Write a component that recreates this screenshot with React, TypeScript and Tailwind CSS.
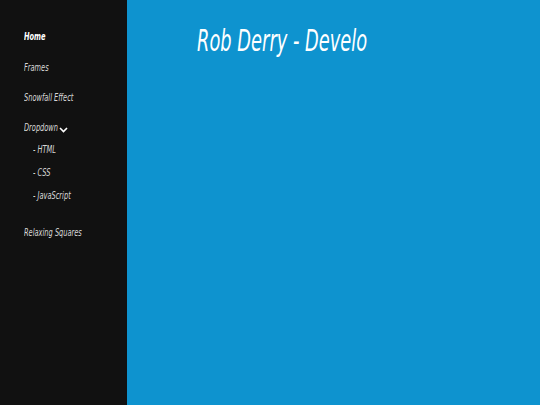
import React from 'react';

const font = { fontFamily: '"DejaVu Sans Condensed", "Liberation Sans", sans-serif' };

const NavLink = ({ label, active, sub }: { label: string; active?: boolean; sub?: boolean }) => (
  <a
    href="#"
    className={`block w-max origin-left scale-x-[0.67] whitespace-nowrap italic text-[11px] leading-none ${sub ? 'ml-[9px]' : ''} ${
      active ? 'text-white font-bold' : 'text-[#d8d8d8]'
    }`}
  >
    {label}
  </a>
);

export default function App() {
  return (
    <div className="flex w-[540px] h-[405px] overflow-hidden leading-none" style={font}>
      {/* Sidebar */}
      <nav className="w-[127px] shrink-0 bg-[#111111] pl-[24px] pt-[31px]">
        <ul className="flex flex-col">
          <li className="h-[31px]"><NavLink label="Home" active /></li>
          <li className="h-[30px]"><NavLink label="Frames" /></li>
          <li className="h-[30px]"><NavLink label="Snowfall Effect" /></li>
          <li>
            <div className="flex items-center h-[11px]">
              <NavLink label="Dropdown" />
              <svg width="9" height="6" viewBox="0 0 9 6" className="-ml-[16px] mt-[4px]" fill="none" stroke="white" strokeWidth="1.6">
                <path d="M1 1l3.5 3.5L8 1" />
              </svg>
            </div>
            <ul className="flex flex-col pt-[11px]">
              <li className="h-[23px]"><NavLink label="- HTML" sub /></li>
              <li className="h-[23px]"><NavLink label="- CSS" sub /></li>
              <li className="h-[37px]"><NavLink label="- JavaScript" sub /></li>
            </ul>
          </li>
          <li><NavLink label="Relaxing Squares" /></li>
        </ul>
      </nav>

      {/* Main */}
      <main className="flex-1 bg-[#0e93cf] pl-[70px] pt-[25px]">
        <h1 className="w-max origin-left scale-x-[0.64] whitespace-nowrap italic text-white text-[31px] leading-none font-normal">
          Rob Derry - Develo
        </h1>
      </main>
    </div>
  );
}
